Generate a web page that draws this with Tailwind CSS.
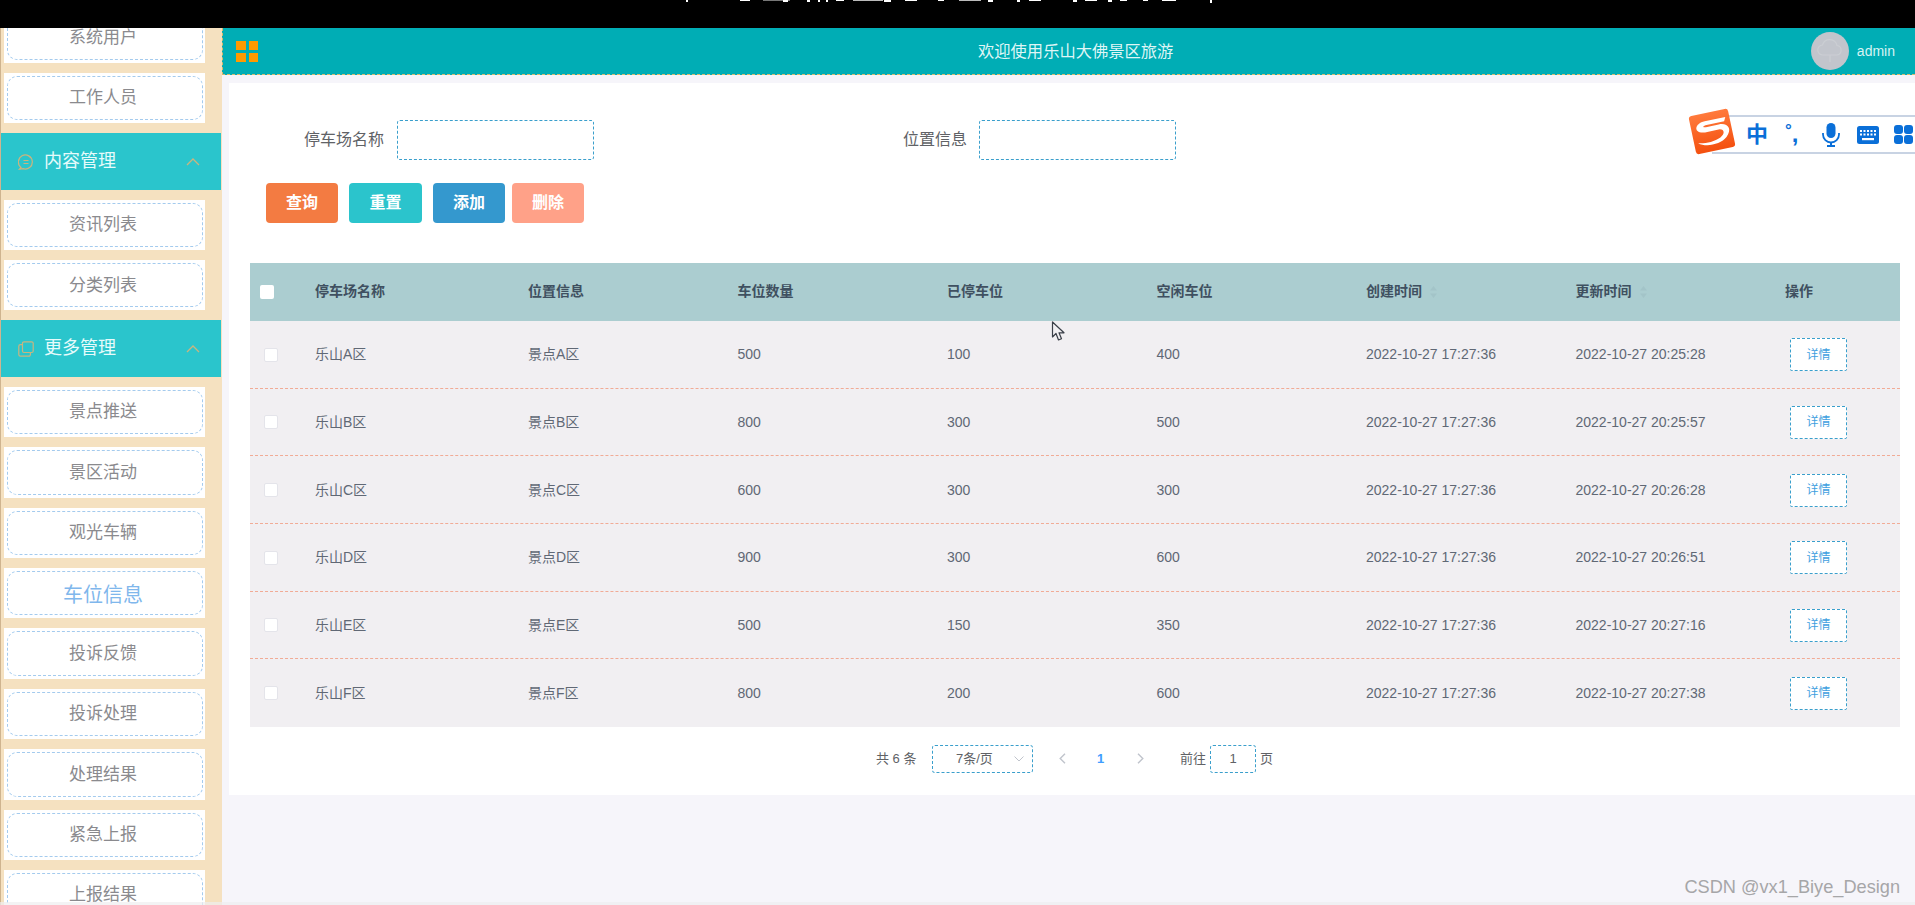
<!DOCTYPE html>
<html lang="zh-CN">
<head>
<meta charset="utf-8">
<title>停车场管理</title>
<script src="https://cdn.jsdelivr.net/npm/@tailwindcss/browser@4"></script>
</head>
<body class="m-0 overflow-hidden bg-[#f6f5fa] font-['Liberation_Sans','Noto_Sans_CJK_SC',sans-serif]">
<div class="relative flex h-[905px] w-[1915px] flex-col overflow-hidden">

  <!-- black strip with clipped caption -->
  <div class="h-[28px] shrink-0 bg-black">
    <svg class="block h-[3px] w-[1915px]" viewBox="0 0 1915 3" fill="#fff">
      <rect x="686" width="2" height="2"/><rect x="740" width="10" height="1"/><rect x="763" width="27" height="1" fill="#777"/><rect x="783" width="5" height="2"/>
      <rect x="807" width="3" height="2"/><rect x="818" width="2" height="2"/><rect x="826" width="2" height="2"/><rect x="836" width="8" height="1"/><rect x="853" width="30" height="1" fill="#bbb"/>
      <rect x="884" width="7" height="2"/><rect x="905" width="12" height="1"/><rect x="938" width="6" height="1"/><rect x="959" width="22" height="1" fill="#bbb"/><rect x="988" width="5" height="2"/>
      <rect x="1017" width="3" height="2"/><rect x="1029" width="12" height="1"/><rect x="1073" width="4" height="2"/><rect x="1085" width="12" height="1"/><rect x="1108" width="4" height="2"/>
      <rect x="1120" width="7" height="1"/><rect x="1143" width="5" height="1"/><rect x="1162" width="14" height="1"/><rect x="1210" width="2" height="3"/>
    </svg>
  </div>

  <div class="flex min-h-0 flex-1">
    <!-- sidebar -->
    <aside class="w-[222px] shrink-0 overflow-hidden border-l border-[#cfb48f] bg-[#f5e1c0] text-[17px] text-[#8a8a8e]">
      <div class="ml-[3px] mt-[-15.4px] h-[50.4px] w-[201px] bg-white py-[3px] pl-[3px] pr-[2px]"><div class="flex h-full items-center justify-center rounded-[10px] border border-dashed border-[#a4cbee] pr-[4px]">系统用户</div></div>
      <div class="ml-[3px] mt-[10px] h-[50.4px] w-[201px] bg-white py-[3px] pl-[3px] pr-[2px]"><div class="flex h-full items-center justify-center rounded-[10px] border border-dashed border-[#a4cbee] pr-[4px]">工作人员</div></div>

      <div class="mt-[10px] flex h-[56.3px] w-[220px] items-center bg-[#2ac5cc] pl-[17px] pr-[21px] text-[18px] text-[#e6fbfb]">
        <svg class="mr-[10px] h-[16px] w-[16px]" viewBox="0 0 16 16" fill="none" stroke="#c9b57f" stroke-width="1.2"><path d="M3 13.5A7 7 0 1 1 5 14.6L1.5 15.2Z"/><path d="M5.5 6.5h5M5.5 9.500h5"/></svg>
        <span>内容管理</span>
        <svg class="ml-auto h-[8px] w-[14px]" viewBox="0 0 14 8" fill="none" stroke="#c9b57f" stroke-width="1.3"><path d="M1 7l6-6 6 6"/></svg>
      </div>
      <div class="ml-[3px] mt-[10px] h-[50.4px] w-[201px] bg-white py-[3px] pl-[3px] pr-[2px]"><div class="flex h-full items-center justify-center rounded-[10px] border border-dashed border-[#a4cbee] pr-[4px]">资讯列表</div></div>
      <div class="ml-[3px] mt-[10px] h-[50.4px] w-[201px] bg-white py-[3px] pl-[3px] pr-[2px]"><div class="flex h-full items-center justify-center rounded-[10px] border border-dashed border-[#a4cbee] pr-[4px]">分类列表</div></div>

      <div class="mt-[10px] flex h-[56.3px] w-[220px] items-center bg-[#2ac5cc] pl-[17px] pr-[21px] text-[18px] text-[#e6fbfb]">
        <svg class="mr-[10px] h-[16px] w-[16px]" viewBox="0 0 16 16" fill="none" stroke="#c9b57f" stroke-width="1.2"><rect x="4.5" y="0.8" width="10.7" height="10.7" rx="1.5"/><path d="M4.5 3.6H2.4A1.6 1.6 0 0 0 .8 5.2v8.4a1.6 1.6 0 0 0 1.6 1.6h8.4a1.6 1.6 0 0 0 1.6-1.6v-2.1"/></svg>
        <span>更多管理</span>
        <svg class="ml-auto h-[8px] w-[14px]" viewBox="0 0 14 8" fill="none" stroke="#c9b57f" stroke-width="1.3"><path d="M1 7l6-6 6 6"/></svg>
      </div>
      <div class="ml-[3px] mt-[10px] h-[50.4px] w-[201px] bg-white py-[3px] pl-[3px] pr-[2px]"><div class="flex h-full items-center justify-center rounded-[10px] border border-dashed border-[#a4cbee] pr-[4px]">景点推送</div></div>
      <div class="ml-[3px] mt-[10px] h-[50.4px] w-[201px] bg-white py-[3px] pl-[3px] pr-[2px]"><div class="flex h-full items-center justify-center rounded-[10px] border border-dashed border-[#a4cbee] pr-[4px]">景区活动</div></div>
      <div class="ml-[3px] mt-[10px] h-[50.4px] w-[201px] bg-white py-[3px] pl-[3px] pr-[2px]"><div class="flex h-full items-center justify-center rounded-[10px] border border-dashed border-[#a4cbee] pr-[4px]">观光车辆</div></div>
      <div class="ml-[3px] mt-[10px] h-[50.4px] w-[201px] bg-white py-[3px] pl-[3px] pr-[2px]"><div class="flex h-full items-center justify-center rounded-[10px] border border-dashed border-[#a4cbee] pr-[4px] pt-[3px] text-[20px] text-[#7fb7ec]">车位信息</div></div>
      <div class="ml-[3px] mt-[10px] h-[50.4px] w-[201px] bg-white py-[3px] pl-[3px] pr-[2px]"><div class="flex h-full items-center justify-center rounded-[10px] border border-dashed border-[#a4cbee] pr-[4px]">投诉反馈</div></div>
      <div class="ml-[3px] mt-[10px] h-[50.4px] w-[201px] bg-white py-[3px] pl-[3px] pr-[2px]"><div class="flex h-full items-center justify-center rounded-[10px] border border-dashed border-[#a4cbee] pr-[4px]">投诉处理</div></div>
      <div class="ml-[3px] mt-[10px] h-[50.4px] w-[201px] bg-white py-[3px] pl-[3px] pr-[2px]"><div class="flex h-full items-center justify-center rounded-[10px] border border-dashed border-[#a4cbee] pr-[4px]">处理结果</div></div>
      <div class="ml-[3px] mt-[10px] h-[50.4px] w-[201px] bg-white py-[3px] pl-[3px] pr-[2px]"><div class="flex h-full items-center justify-center rounded-[10px] border border-dashed border-[#a4cbee] pr-[4px]">紧急上报</div></div>
      <div class="ml-[3px] mt-[10px] h-[50.4px] w-[201px] bg-white py-[3px] pl-[3px] pr-[2px]"><div class="flex h-full items-center justify-center rounded-[10px] border border-dashed border-[#a4cbee] pr-[4px]">上报结果</div></div>
    </aside>

    <!-- main -->
    <main class="min-w-0 flex-1">
      <header class="flex h-[47px] items-center border-b border-l border-dashed border-[#d8b96e] bg-[#00adb5] pl-[13px] pr-[20px]">
        <div class="grid h-[21px] w-[22px] grid-cols-2 gap-[3px]">
          <span class="bg-[#ff9a00]"></span><span class="bg-[#ff9a00]"></span><span class="bg-[#ff9a00]"></span><span class="bg-[#ff9a00]"></span>
        </div>
        <span class="ml-[720px] text-[16.3px] text-[#dff6f6]">欢迎使用乐山大佛景区旅游</span>
        <div class="ml-auto flex h-[38px] w-[38px] items-center justify-center rounded-full bg-[#c2c5cc]">
          <svg class="h-[24px] w-[28px]" viewBox="0 0 28 24" fill="none" stroke="#cbced3" stroke-width="1.2"><path d="M7 16a5 5 0 0 1-.5-10A7.5 7.5 0 0 1 21 6.5 4.8 4.8 0 0 1 21 16Z"/><path d="M14 16v7"/></svg>
        </div>
        <span class="ml-[8px] text-[14px] text-[#d6f3f3]">admin</span>
      </header>

      <section class="ml-[7px] mt-[8px] h-[712px] bg-white pt-[37px] text-[14px] text-[#606875]">
        <!-- search form -->
        <div class="flex h-[40px] items-center text-[16px] text-[#606266]">
          <label class="w-[155px] text-right">停车场名称</label>
          <div class="ml-[13px] h-[40px] w-[197px] rounded-[3px] border border-dashed border-[#3a9fcc]"></div>
          <label class="w-[373px] text-right">位置信息</label>
          <div class="ml-[12px] h-[40px] w-[197px] rounded-[3px] border border-dashed border-[#3a9fcc]"></div>
        </div>
        <div class="ml-[37px] mt-[23px] flex h-[40px] text-[16px] font-bold text-white">
          <button class="w-[72px] rounded-[4px] bg-[#f37b42]">查询</button>
          <button class="ml-[11px] w-[73px] rounded-[4px] bg-[#2bc4cc]">重置</button>
          <button class="ml-[11px] w-[72px] rounded-[4px] bg-[#3498ce]">添加</button>
          <button class="ml-[7px] w-[72px] rounded-[4px] bg-[#ffa188]">删除</button>
        </div>

        <!-- table -->
        <div class="ml-[21px] mt-[40px] w-[1650px]">
          <div class="grid h-[58px] grid-cols-[53px_213px_repeat(6,209.5px)_1fr] items-center bg-[#abcdd0] pb-[1px] font-bold text-[#3f5060]">
            <div class="pl-[10px]"><span class="block h-[14px] w-[14px] rounded-[2px] bg-white"></span></div>
            <div class="pl-[12px]">停车场名称</div><div class="pl-[12px]">位置信息</div><div class="pl-[12px]">车位数量</div><div class="pl-[12px]">已停车位</div><div class="pl-[12px]">空闲车位</div>
            <div class="flex items-center pl-[12px]">创建时间<svg class="ml-[8px] h-[12px] w-[7px]" viewBox="0 0 7 12" fill="#a3c4c8"><path d="M3.5 0 7 4.5H0ZM3.5 12 0 7.5h7Z"/></svg></div>
            <div class="flex items-center pl-[12px]">更新时间<svg class="ml-[8px] h-[12px] w-[7px]" viewBox="0 0 7 12" fill="#a3c4c8"><path d="M3.5 0 7 4.5H0ZM3.5 12 0 7.5h7Z"/></svg></div>
            <div class="pl-[12px]">操作</div>
          </div>

          <div class="grid h-[67.67px] grid-cols-[53px_213px_repeat(6,209.5px)_1fr] items-center border-b border-dashed border-[#f1ab96] bg-[#f1eff2] pt-[1px]">
            <div class="pl-[14px]"><span class="block h-[14px] w-[14px] rounded-[2px] border border-[#e4e4ea] bg-white"></span></div>
            <div class="pl-[12px]">乐山A区</div><div class="pl-[12px]">景点A区</div><div class="pl-[12px]">500</div><div class="pl-[12px]">100</div><div class="pl-[12px]">400</div><div class="pl-[12px]">2022-10-27 17:27:36</div><div class="pl-[12px]">2022-10-27 20:25:28</div>
            <div class="pl-[17px]"><span class="flex h-[33px] w-[57px] items-center justify-center rounded-[2px] border border-dashed border-[#3a9fcc] bg-white text-[12px] text-[#3f9fe0]">详情</span></div>
          </div>
          <div class="grid h-[67.67px] grid-cols-[53px_213px_repeat(6,209.5px)_1fr] items-center border-b border-dashed border-[#f1ab96] bg-[#f1eff2] pt-[1px]">
            <div class="pl-[14px]"><span class="block h-[14px] w-[14px] rounded-[2px] border border-[#e4e4ea] bg-white"></span></div>
            <div class="pl-[12px]">乐山B区</div><div class="pl-[12px]">景点B区</div><div class="pl-[12px]">800</div><div class="pl-[12px]">300</div><div class="pl-[12px]">500</div><div class="pl-[12px]">2022-10-27 17:27:36</div><div class="pl-[12px]">2022-10-27 20:25:57</div>
            <div class="pl-[17px]"><span class="flex h-[33px] w-[57px] items-center justify-center rounded-[2px] border border-dashed border-[#3a9fcc] bg-white text-[12px] text-[#3f9fe0]">详情</span></div>
          </div>
          <div class="grid h-[67.67px] grid-cols-[53px_213px_repeat(6,209.5px)_1fr] items-center border-b border-dashed border-[#f1ab96] bg-[#f1eff2] pt-[1px]">
            <div class="pl-[14px]"><span class="block h-[14px] w-[14px] rounded-[2px] border border-[#e4e4ea] bg-white"></span></div>
            <div class="pl-[12px]">乐山C区</div><div class="pl-[12px]">景点C区</div><div class="pl-[12px]">600</div><div class="pl-[12px]">300</div><div class="pl-[12px]">300</div><div class="pl-[12px]">2022-10-27 17:27:36</div><div class="pl-[12px]">2022-10-27 20:26:28</div>
            <div class="pl-[17px]"><span class="flex h-[33px] w-[57px] items-center justify-center rounded-[2px] border border-dashed border-[#3a9fcc] bg-white text-[12px] text-[#3f9fe0]">详情</span></div>
          </div>
          <div class="grid h-[67.67px] grid-cols-[53px_213px_repeat(6,209.5px)_1fr] items-center border-b border-dashed border-[#f1ab96] bg-[#f1eff2] pt-[1px]">
            <div class="pl-[14px]"><span class="block h-[14px] w-[14px] rounded-[2px] border border-[#e4e4ea] bg-white"></span></div>
            <div class="pl-[12px]">乐山D区</div><div class="pl-[12px]">景点D区</div><div class="pl-[12px]">900</div><div class="pl-[12px]">300</div><div class="pl-[12px]">600</div><div class="pl-[12px]">2022-10-27 17:27:36</div><div class="pl-[12px]">2022-10-27 20:26:51</div>
            <div class="pl-[17px]"><span class="flex h-[33px] w-[57px] items-center justify-center rounded-[2px] border border-dashed border-[#3a9fcc] bg-white text-[12px] text-[#3f9fe0]">详情</span></div>
          </div>
          <div class="grid h-[67.67px] grid-cols-[53px_213px_repeat(6,209.5px)_1fr] items-center border-b border-dashed border-[#f1ab96] bg-[#f1eff2] pt-[1px]">
            <div class="pl-[14px]"><span class="block h-[14px] w-[14px] rounded-[2px] border border-[#e4e4ea] bg-white"></span></div>
            <div class="pl-[12px]">乐山E区</div><div class="pl-[12px]">景点E区</div><div class="pl-[12px]">500</div><div class="pl-[12px]">150</div><div class="pl-[12px]">350</div><div class="pl-[12px]">2022-10-27 17:27:36</div><div class="pl-[12px]">2022-10-27 20:27:16</div>
            <div class="pl-[17px]"><span class="flex h-[33px] w-[57px] items-center justify-center rounded-[2px] border border-dashed border-[#3a9fcc] bg-white text-[12px] text-[#3f9fe0]">详情</span></div>
          </div>
          <div class="grid h-[67.67px] grid-cols-[53px_213px_repeat(6,209.5px)_1fr] items-center bg-[#f1eff2]">
            <div class="pl-[14px]"><span class="block h-[14px] w-[14px] rounded-[2px] border border-[#e4e4ea] bg-white"></span></div>
            <div class="pl-[12px]">乐山F区</div><div class="pl-[12px]">景点F区</div><div class="pl-[12px]">800</div><div class="pl-[12px]">200</div><div class="pl-[12px]">600</div><div class="pl-[12px]">2022-10-27 17:27:36</div><div class="pl-[12px]">2022-10-27 20:27:38</div>
            <div class="pl-[17px]"><span class="flex h-[33px] w-[57px] items-center justify-center rounded-[2px] border border-dashed border-[#3a9fcc] bg-white text-[12px] text-[#3f9fe0]">详情</span></div>
          </div>
        </div>

        <!-- pagination -->
        <div class="ml-[647px] mt-[18px] flex h-[28px] items-center text-[13px] text-[#606266]">
          <span class="w-[41px] whitespace-nowrap">共 6 条</span>
          <div class="relative ml-[15px] flex h-[28px] w-[101px] items-center rounded-[3px] border border-dashed border-[#3a9fcc] pl-[23px]">
            7条/页
            <svg class="absolute right-[8px] top-[10px] h-[6px] w-[10px]" viewBox="0 0 10 6" fill="none" stroke="#c0c4cc"><path d="M.5.5 5 5 9.5.5"/></svg>
          </div>
          <svg class="ml-[26px] h-[11px] w-[7px]" viewBox="0 0 7 11" fill="none" stroke="#c0c4cc" stroke-width="1.4"><path d="M6 .7 1.2 5.5 6 10.3"/></svg>
          <span class="ml-[31px] w-[8px] font-bold text-[#409eff]">1</span>
          <svg class="ml-[32px] h-[11px] w-[7px]" viewBox="0 0 7 11" fill="none" stroke="#c0c4cc" stroke-width="1.4"><path d="M1 .7 5.8 5.5 1 10.3"/></svg>
          <span class="ml-[36px]">前往</span>
          <div class="ml-[4px] flex h-[28px] w-[46px] items-center justify-center rounded-[3px] border border-dashed border-[#3a9fcc]">1</div>
          <span class="ml-[4px]">页</span>
        </div>
      </section>
    </main>
  </div>

  <!-- bottom shade -->
  <div class="absolute bottom-0 left-0 h-[3px] w-full bg-[#eeeef0]/70"></div>

  <!-- IME toolbar -->
  <div class="absolute left-[1712px] right-0 top-[115px] flex h-[39px] items-center border-y-2 border-[#c8d3e3] bg-white pl-[34px] text-[#0a6fd8]">
    <span class="w-[22px] text-[22px] font-bold leading-none">中</span>
    <span class="ml-[17px] flex h-[22px] w-[20px] font-bold">
      <span class="text-[17px] leading-[14px]">°</span><span class="text-[24px] leading-[20px]">,</span>
    </span>
    <svg class="ml-[17px] h-[24px] w-[18px]" viewBox="0 0 18 24" fill="#0a6fd8"><rect x="4.5" y="0" width="9" height="15" rx="4.5"/><path d="M1 10v1.5A8 8 0 0 0 17 11.500V10" fill="none" stroke="#0a6fd8" stroke-width="1.8"/><rect x="8" y="19" width="2" height="3"/><rect x="5" y="22" width="8" height="2"/></svg>
    <svg class="ml-[17px] h-[18px] w-[22px]" viewBox="0 0 22 18"><rect width="22" height="18" rx="2.500" fill="#0a6fd8"/><path d="M3 5h16M3 8.500h16" stroke="#fff" stroke-width="2" stroke-dasharray="2 1.500"/><rect x="5" y="12" width="12" height="2.200" fill="#fff"/></svg>
    <div class="ml-[15px] grid h-[19px] w-[19px] shrink-0 grid-cols-2 gap-[1.500px]">
      <span class="rounded-[3px] bg-[#0a6fd8]"></span><span class="rounded-[3px] bg-[#0a6fd8]"></span><span class="rounded-[3px] bg-[#0a6fd8]"></span><span class="rounded-[3px] bg-[#0a6fd8]"></span>
    </div>
  </div>
  <svg class="absolute left-[1687px] top-[107px] h-[49px] w-[50px]" viewBox="0 0 50 49">
    <defs><linearGradient id="sg" x1="0" y1="0" x2="0" y2="1"><stop offset="0" stop-color="#ff7a3c"/><stop offset="1" stop-color="#f4500f"/></linearGradient></defs>
    <g transform="rotate(-12 25 24.500)">
      <rect x="5" y="5" width="40" height="39" rx="3" fill="url(#sg)"/>
      <path d="M41 13H20C9 13 6 23 18 24H33C38 25 37 30 32 32 25 35 15 35 9 33 16 39 31 39 38 33 46 26 42 19 33 19H20C16 19 17 17 21 17H39Z" fill="#fff"/>
    </g>
  </svg>

  <!-- mouse pointer -->
  <svg class="absolute left-[1051px] top-[321px] h-[21px] w-[14px]" viewBox="0 0 14 21"><path d="M1.500 1V16L5 12.500 7.500 19 10.500 17.800 8 11.800H13Z" fill="#f1eff2" stroke="#3a3f48" stroke-width="1.200" stroke-linejoin="round"/></svg>

  <!-- watermark -->
  <div class="absolute right-[15px] top-[876px] text-[18.2px] leading-[22px] text-[#a6a6a8]">CSDN @vx1_Biye_Design</div>
</div>
</body>
</html>
